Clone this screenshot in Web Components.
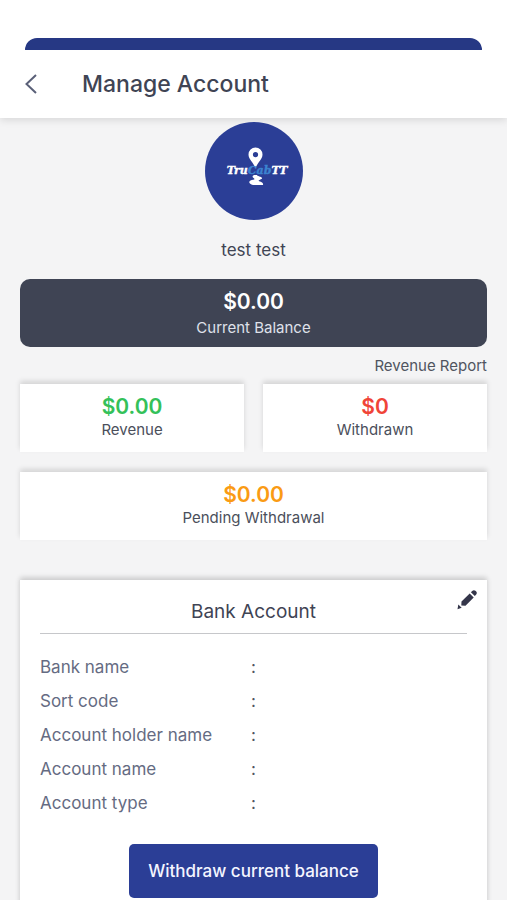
<!DOCTYPE html>
<html lang="en">
<head>
<meta charset="utf-8">
<meta name="viewport" content="width=device-width, initial-scale=1">
<title>Manage Account</title>
<style>
  html { background: #f4f4f5; }
  body {
    margin: 0;
    font-family: Inter, "Liberation Sans", sans-serif;
    color: #3f4454;
    --navy: #2b3e96;
    --slate: #3f4454;
    --card-shadow: 0 -3px 5px rgba(0, 0, 0, .13);
  }
</style>
</head>
<body>
<account-page>
  <page-header slot="header">Manage Account</page-header>
  <user-profile>test test</user-profile>
  <balance-card amount="$0.00">Current Balance</balance-card>
  <report-link href="#revenue-report">Revenue Report</report-link>
  <stat-grid>
    <stat-card amount="$0.00" tone="green">Revenue</stat-card>
    <stat-card amount="$0" tone="red">Withdrawn</stat-card>
    <stat-card amount="$0.00" tone="orange" wide>Pending Withdrawal</stat-card>
  </stat-grid>
  <bank-card>
    <span slot="title">Bank Account</span>
    <action-button slot="action">Withdraw current balance</action-button>
  </bank-card>
</account-page>

<script>
  const define = (name, html, setup) => {
    const template = document.createElement('template');
    template.innerHTML = html;
    customElements.define(name, class extends HTMLElement {
      constructor() {
        super();
        this.attachShadow({ mode: 'open' }).append(template.content.cloneNode(true));
      }
      connectedCallback() { if (setup) setup(this, this.shadowRoot); }
    });
  };
  const showAmount = (host, root) => {
    root.querySelector('.amount').textContent = host.getAttribute('amount');
  };

  define('account-page', `
    <style>
      :host { display: block; }
      main { display: flex; flex-direction: column; padding: 4px 20px 0; }
    </style>
    <slot name="header"></slot>
    <main><slot></slot></main>`);

  define('page-header', `
    <style>
      :host { display: block; background: #fff; padding-top: 38px;
              box-shadow: 0 2px 8px rgba(0, 0, 0, .12); }
      .sheet { height: 12px; margin: 0 25px; background: #263884; border-radius: 12px 12px 0 0; }
      .bar { display: flex; align-items: center; gap: 35px; height: 68px; padding: 0 15px; }
      button { display: grid; place-items: center; width: 32px; height: 40px; padding: 0;
               border: 0; background: none; color: #5a6078; }
      h1 { margin: 0; font-size: 23px; line-height: 32px; font-weight: 500; }
    </style>
    <div class="sheet"></div>
    <div class="bar">
      <button type="button" aria-label="Back">
        <svg width="14" height="22" viewBox="0 0 14 22" fill="none" stroke="currentColor" stroke-width="2"><path d="M12 2 2.500 11l9.500 9"/></svg>
      </button>
      <h1><slot></slot></h1>
    </div>`);

  define('user-profile', `
    <style>
      :host { display: flex; flex-direction: column; align-items: center; gap: 18px; }
      svg { display: block; border-radius: 50%; background: var(--navy); }
      .name { font-size: 17px; line-height: 24px; }
      text { font-family: "DejaVu Serif", serif; font-size: 11px; font-weight: 700; font-style: italic; fill: #fff; stroke: #fff; stroke-width: .4; }
      tspan { fill: #3c83d0; stroke: #3c83d0; }
    </style>
    <svg width="98" height="98" viewBox="0 0 98 98" role="img" aria-label="TruCabTT logo">
      <path fill="#fff" fill-rule="evenodd" d="M50.500 25.500a7 7 0 0 0-7 7c0 4.500 4.500 7.500 7 13.500 2.500-6 7-9 7-13.500a7 7 0 0 0-7-7Zm0 4.500a2.600 2.600 0 1 1 0 5.200 2.600 2.600 0 0 1 0-5.200Z"/>
      <path fill="#fff" d="M49 53h3c-.5 1 4.500 1.300 5 3 .3 1.400-3.500 1.700-3.500 2.600 0 1.100 5.500 1.400 4.500 4.400H48c-3.500-.8-5-3-2.500-4.400 1.700-.8 4.500-.8 4-1.700-1-1-3.500-2.300-.5-3.900Z"/>
      <text x="52" y="52" text-anchor="middle">Tru<tspan>Cab</tspan>TT</text>
    </svg>
    <div class="name"><slot></slot></div>`);

  define('balance-card', `
    <style>
      :host { display: block; margin-top: 17px; padding: 8px 16px; border-radius: 10px;
              background: var(--slate); text-align: center; }
      .amount { color: #fff; font-size: 21px; line-height: 30px; font-weight: 600; }
      .label { color: #dfe1ea; font-size: 15px; line-height: 22px; }
    </style>
    <div class="amount"></div>
    <div class="label"><slot></slot></div>`, showAmount);

  define('report-link', `
    <style>
      :host { display: block; margin: 8px 0 7px; text-align: right; font-size: 15px; line-height: 22px; }
      a { color: #50545f; text-decoration: none; }
    </style>
    <a><slot></slot></a>`, (host, root) => {
      root.querySelector('a').href = host.getAttribute('href');
    });

  define('stat-grid', `
    <style>
      :host { display: grid; grid-template-columns: 1fr 1fr; gap: 20px 19px; }
    </style>
    <slot></slot>`);

  define('stat-card', `
    <style>
      :host { display: block; padding: 9px 12px 13px; background: #fff; text-align: center;
              box-shadow: var(--card-shadow); }
      :host([wide]) { grid-column: 1 / -1; }
      :host([tone="green"]) { --tone: #34c159; }
      :host([tone="red"]) { --tone: #f04438; }
      :host([tone="orange"]) { --tone: #fa9b14; }
      .amount { color: var(--tone); font-size: 21px; line-height: 28px; font-weight: 600; }
      .label { color: #4b4f5b; font-size: 15px; line-height: 18px; }
    </style>
    <div class="amount"></div>
    <div class="label"><slot></slot></div>`, showAmount);

  define('bank-card', `
    <style>
      :host { display: block; position: relative; margin-top: 40px; padding: 17px 20px 24px;
              background: #fff; box-shadow: var(--card-shadow), 0 0 6px rgba(0, 0, 0, .08); }
      h2 { margin: 0; padding-bottom: 6px; border-bottom: 1px solid #c6c7ca; text-align: center;
           font-size: 19px; line-height: 30px; font-weight: 400; }
      .edit { position: absolute; top: 8px; right: 8px; width: 24px; height: 24px; padding: 0;
              border: 0; background: none; color: #34364a; }
      svg { display: block; }
      table { width: 100%; margin-top: 16px; border-collapse: collapse; table-layout: fixed;
              font-size: 17px; line-height: 34px; color: #656b82; }
      th, td { padding: 0; text-align: left; font-weight: 400; }
      th { width: 49%; }
      .colon { width: 2%; text-align: center; color: #50545f; }
      .action { display: flex; justify-content: center; margin-top: 24px; }
    </style>
    <button class="edit" type="button" aria-label="Edit bank account">
      <svg width="24" height="24" viewBox="0 0 24 24" fill="currentColor"><path d="m6.500 13.500 8.200-8 4 4-8.200 8.200-4.200-.3ZM15.900 4.300l1.300-1.300c1-1 2.300-1 3.200-.2l.8.800c.9.900.8 2.200-.2 3.200l-1.200 1.200ZM3.300 16.500l3.400 3.200-4.200 1.500Z"/></svg>
    </button>
    <h2><slot name="title"></slot></h2>
    <table>
      <tbody>
        <tr><th scope="row">Bank name</th><td class="colon">:</td><td></td></tr>
        <tr><th scope="row">Sort code</th><td class="colon">:</td><td></td></tr>
        <tr><th scope="row">Account holder name</th><td class="colon">:</td><td></td></tr>
        <tr><th scope="row">Account name</th><td class="colon">:</td><td></td></tr>
        <tr><th scope="row">Account type</th><td class="colon">:</td><td></td></tr>
      </tbody>
    </table>
    <div class="action"><slot name="action"></slot></div>`);

  define('action-button', `
    <style>
      :host { display: block; }
      button { display: block; padding: 15px 19px; border: 0; border-radius: 5px; background: var(--navy);
               color: #f4f5ff; font: inherit; font-size: 17px; line-height: 24px; font-weight: 500; }
    </style>
    <button type="button"><slot></slot></button>`);
</script>
</body>
</html>
